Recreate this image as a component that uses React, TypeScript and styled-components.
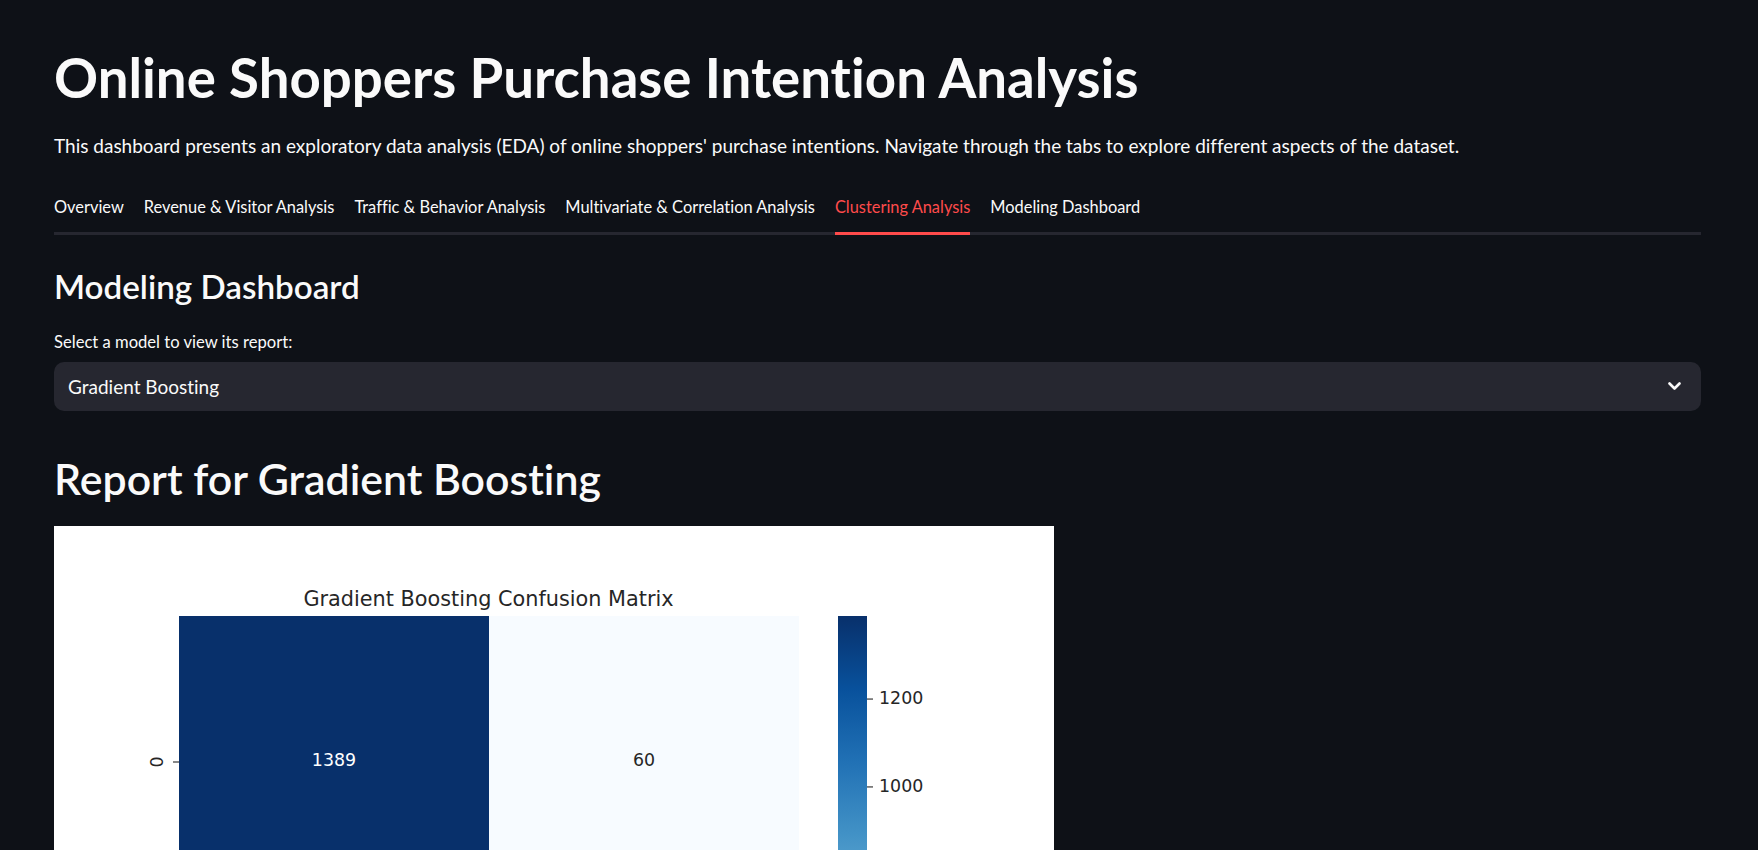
import React from "react";
import styled, { createGlobalStyle } from "styled-components";

const GlobalStyle = createGlobalStyle`
  html, body {
    margin: 0;
    padding: 0;
    background: #0e1117;
  }
  body {
    font-family: Lato, "Noto Sans", "Liberation Sans", sans-serif;
    font-variant-ligatures: none;
    color: #fafafa;
    -webkit-font-smoothing: antialiased;
  }
`;

const Page = styled.main`
  display: flex;
  flex-direction: column;
  padding: 41px 57px 0 54px;
`;

const Title = styled.h1`
  margin: 0;
  font-size: 54.6px;
  line-height: 72px;
  font-weight: 700;
  color: #fafafa;
`;

const Intro = styled.p`
  margin: 19px 0 0;
  font-size: 19px;
  line-height: 28px;
  color: #fafafa;
`;

const TabList = styled.nav`
  display: flex;
  gap: 20px;
  margin-top: 35px;
  border-bottom: 3px solid #262730;
`;

const Tab = styled.button<{ $active?: boolean }>`
  margin: 0 0 -3px;
  padding: 0 0 13px;
  background: none;
  border: none;
  border-bottom: 3px solid ${(p) => (p.$active ? "#ff4b4b" : "transparent")};
  font-family: inherit;
  font-variant-ligatures: none;
  font-size: 16.4px;
  line-height: 24px;
  color: ${(p) => (p.$active ? "#ff4b4b" : "#fafafa")};
  cursor: pointer;
`;

const SectionHeading = styled.h2`
  margin: 31px 0 0;
  font-size: 33.2px;
  line-height: 40px;
  font-weight: 600;
`;

const FieldLabel = styled.label`
  margin-top: 25px;
  font-size: 16.6px;
  line-height: 22px;
`;

const SelectBox = styled.div`
  margin-top: 9px;
  height: 49px;
  display: flex;
  align-items: center;
  justify-content: space-between;
  padding: 0 20px 0 14px;
  background: #262730;
  border-radius: 10px;
`;

const SelectValue = styled.span`
  font-size: 19px;
  line-height: 24px;
`;

const ReportHeading = styled.h1`
  margin: 42px 0 0;
  font-size: 42.8px;
  line-height: 52px;
  font-weight: 600;
`;

const Figure = styled.div`
  margin-top: 21px;
  width: 1000px;
  height: 750px;
  background: #ffffff;
`;

const Chevron = () => (
  <svg width="13" height="9" viewBox="0 0 13 9" fill="none">
    <polyline
      points="1.5,1.5 6.5,6.5 11.5,1.5"
      stroke="#fafafa"
      strokeWidth="2.6"
      strokeLinecap="round"
      strokeLinejoin="round"
    />
  </svg>
);

const matrix = [
  [1389, 60],
  [148, 252],
];
const vmin = 60;
const vmax = 1389;
const blues = ["#f7fbff", "#deebf7", "#c6dbef", "#9ecae1", "#6baed6", "#4292c6", "#2171b5", "#08519c", "#08306b"];

function hexToRgb(h: string) {
  const n = parseInt(h.slice(1), 16);
  return [(n >> 16) & 255, (n >> 8) & 255, n & 255];
}
function colorFor(v: number) {
  const t = Math.max(0, Math.min(1, (v - vmin) / (vmax - vmin)));
  const pos = t * (blues.length - 1);
  const i = Math.min(blues.length - 2, Math.floor(pos));
  const f = pos - i;
  const a = hexToRgb(blues[i]);
  const b = hexToRgb(blues[i + 1]);
  const c = a.map((x, k) => Math.round(x + (b[k] - x) * f));
  return `rgb(${c[0]},${c[1]},${c[2]})`;
}

const AX_L = 125;
const AX_T = 90;
const CELL_W = 310;
const CELL_H = 292;
const CB_L = 784;
const CB_W = 29;
const CB_H = CELL_H * 2;
const chartFont = "'DejaVu Sans', 'Liberation Sans', sans-serif";

const ConfusionMatrixChart = () => {
  const cbTicks = [1200, 1000, 800, 600, 400, 200];
  const yFor = (v: number) => AX_T + ((vmax - v) / (vmax - vmin)) * CB_H;
  return (
    <svg width="1000" height="750" viewBox="0 0 1000 750">
      <defs>
        <linearGradient id="cb" x1="0" y1="1" x2="0" y2="0">
          {blues.map((c, i) => (
            <stop key={c} offset={i / (blues.length - 1)} stopColor={c} />
          ))}
        </linearGradient>
      </defs>
      <text x="434.5" y="80" textAnchor="middle" fontFamily={chartFont} fontSize="20.8" fill="#262626">
        Gradient Boosting Confusion Matrix
      </text>
      {matrix.map((row, r) =>
        row.map((v, c) => {
          const x = AX_L + c * CELL_W;
          const y = AX_T + r * CELL_H;
          const dark = (v - vmin) / (vmax - vmin) > 0.45;
          return (
            <g key={`${r}-${c}`}>
              <rect x={x} y={y} width={CELL_W} height={CELL_H} fill={colorFor(v)} />
              <text
                x={x + CELL_W / 2}
                y={y + CELL_H / 2 - 2}
                textAnchor="middle"
                dominantBaseline="central"
                fontFamily={chartFont}
                fontSize="17.4"
                fill={dark ? "#ffffff" : "#262626"}
              >
                {v}
              </text>
            </g>
          );
        })
      )}
      {[0, 1].map((r) => {
        const cy = AX_T + r * CELL_H + CELL_H / 2;
        return (
          <g key={`yt${r}`}>
            <line x1={AX_L - 6} y1={cy} x2={AX_L} y2={cy} stroke="#262626" strokeWidth="1.1" />
            <text
              x={103}
              y={cy}
              transform={`rotate(-90 103 ${cy})`}
              textAnchor="middle"
              dominantBaseline="central"
              fontFamily={chartFont}
              fontSize="17.4"
              fill="#262626"
            >
              {r}
            </text>
          </g>
        );
      })}
      {[0, 1].map((c) => {
        const cx = AX_L + c * CELL_W + CELL_W / 2;
        const by = AX_T + CB_H;
        return (
          <g key={`xt${c}`}>
            <line x1={cx} y1={by} x2={cx} y2={by + 6} stroke="#262626" strokeWidth="1.1" />
            <text x={cx} y={by + 24} textAnchor="middle" fontFamily={chartFont} fontSize="17.4" fill="#262626">
              {c}
            </text>
          </g>
        );
      })}
      <text x={AX_L + CELL_W} y={AX_T + CB_H + 50} textAnchor="middle" fontFamily={chartFont} fontSize="17.4" fill="#262626">
        Predicted
      </text>
      <text
        x={70}
        y={AX_T + CELL_H}
        transform={`rotate(-90 70 ${AX_T + CELL_H})`}
        textAnchor="middle"
        fontFamily={chartFont}
        fontSize="17.4"
        fill="#262626"
      >
        Actual
      </text>
      <rect x={CB_L} y={AX_T} width={CB_W} height={CB_H} fill="url(#cb)" />
      {cbTicks.map((t) => (
        <g key={t}>
          <line x1={CB_L + CB_W} y1={yFor(t)} x2={CB_L + CB_W + 6} y2={yFor(t)} stroke="#262626" strokeWidth="1.1" />
          <text
            x={CB_L + CB_W + 12}
            y={yFor(t) - 1}
            dominantBaseline="central"
            fontFamily={chartFont}
            fontSize="17.4"
            fill="#262626"
          >
            {t}
          </text>
        </g>
      ))}
    </svg>
  );
};

const tabs = [
  "Overview",
  "Revenue & Visitor Analysis",
  "Traffic & Behavior Analysis",
  "Multivariate & Correlation Analysis",
  "Clustering Analysis",
  "Modeling Dashboard",
];

export default function App() {
  return (
    <>
      <GlobalStyle />
      <Page>
        <Title>Online Shoppers Purchase Intention Analysis</Title>
        <Intro>
          This dashboard presents an exploratory data analysis (EDA) of online shoppers' purchase intentions. Navigate
          through the tabs to explore different aspects of the dataset.
        </Intro>
        <TabList>
          {tabs.map((t) => (
            <Tab key={t} $active={t === "Clustering Analysis"}>
              {t}
            </Tab>
          ))}
        </TabList>
        <SectionHeading>Modeling Dashboard</SectionHeading>
        <FieldLabel>Select a model to view its report:</FieldLabel>
        <SelectBox>
          <SelectValue>Gradient Boosting</SelectValue>
          <Chevron />
        </SelectBox>
        <ReportHeading>Report for Gradient Boosting</ReportHeading>
        <Figure>
          <ConfusionMatrixChart />
        </Figure>
      </Page>
    </>
  );
}
